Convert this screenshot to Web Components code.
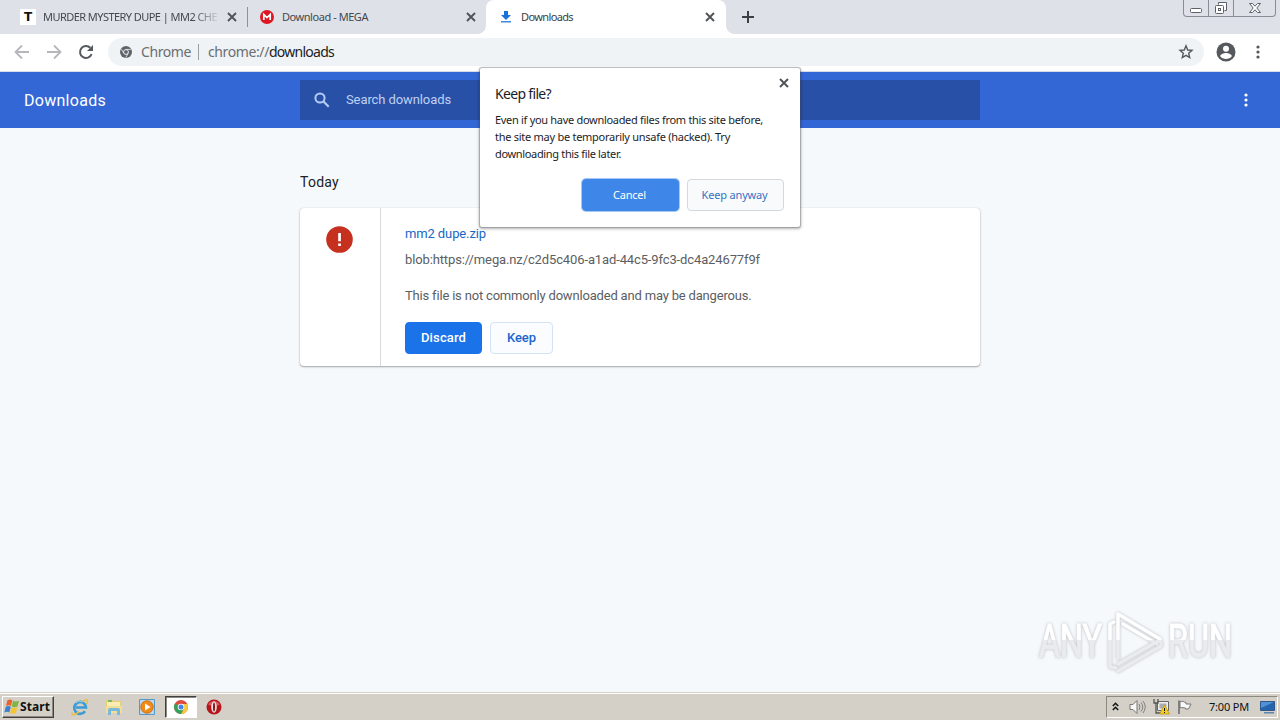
<!DOCTYPE html>
<html lang="en">
<head>
<meta charset="utf-8">
<title>Downloads</title>
<style>
    html, body { margin: 0; width: 1280px; height: 720px; overflow: hidden; }
    body { font-family: "Noto Sans", "Liberation Sans", sans-serif; font-size: 11px; }
</style>
</head>
<body>
<desktop-screen></desktop-screen>
<script>
// Icon data
const icons = {
    back: [16, 16, `<path d="M15 8H2M8 1.5 1.5 8 8 14.5" fill="none" stroke="#b5b7ba" stroke-width="1.8"/>`],
    forward: [16, 16, `<path d="M1 8h13M8 1.5 14.5 8 8 14.5" fill="none" stroke="#b5b7ba" stroke-width="1.8"/>`],
    reload: [16, 16, `<path d="M13.6 10.2A6 6 0 1 1 12.3 3.8" fill="none" stroke="#55585c" stroke-width="2"/><path d="M15 1v6H9z" fill="#55585c"/>`],
    close: [10, 10, `<path d="M1 1l8 8M9 1 1 9" stroke="#505357" stroke-width="1.9"/>`],
    plus: [12, 12, `<path d="M6 0v12M0 6h12" stroke="#3c4043" stroke-width="2"/>`],
    letterT: [16, 16, `<path d="M0 0h16v16H0z" fill="#fff"/><text x="8" y="12.4" text-anchor="middle" font-family="DejaVu Sans" font-weight="bold" font-size="12" fill="#111">T</text>`],
    mega: [14, 14, `<circle cx="7" cy="7" r="7" fill="#dd1822"/><path d="M3.8 10V4.5L7 7.6l3.2-3.1V10" fill="none" stroke="#fff" stroke-width="1.7"/>`],
    download: [10, 12, `<path d="M3 0h4v4h3L5 9 0 4h3z" fill="#1a73d8"/><path d="M0 10h10v1.5H0z" fill="#3b8be0"/>`],
    chromeGrey: [12, 12, `<circle cx="6" cy="6" r="6" fill="#5f6368"/><circle cx="6" cy="6" r="2.4" fill="#5f6368" stroke="#eceef1" stroke-width="1"/><path d="M6 3.4h5M3.8 7.3 1.4 3.1M8.2 7.3 5.8 11.5" stroke="#eceef1" stroke-width=".8"/>`],
    star: [16, 16, `<path d="m8 1.8 1.7 4.2 4.3.4-3.3 2.9 1 4.3L8 11.3l-3.7 2.3 1-4.3L2 6.4l4.300-.4z" fill="none" stroke="#55585c" stroke-width="1.4"/>`],
    account: [20, 20, `<circle cx="10" cy="10" r="9.5" fill="#55585c"/><circle cx="10" cy="6.8" r="3" fill="#fff"/><path d="M4.2 14.2c.3-2.4 3.9-3.2 5.8-3.2s5.5.8 5.8 3.2C14.5 16 12.3 17 10 17s-4.5-1-5.8-2.8z" fill="#fff"/>`],
    dots: [4, 14, `<circle cx="2" cy="2" r="1.6"/><circle cx="2" cy="7" r="1.6"/><circle cx="2" cy="12" r="1.6"/>`],
    search: [16, 16, `<circle cx="6" cy="6" r="4.6" fill="none" stroke="#b4cbf5" stroke-width="2"/><path d="m9.3 9.3 5.4 5.4" stroke="#b4cbf5" stroke-width="2.2"/>`],
    danger: [27, 27, `<circle cx="13.5" cy="13.5" r="13.3" fill="#c5301f"/><path d="M12.2 7h2.7v8.2h-2.7zm0 10.4h2.7V20h-2.7z" fill="#fff"/>`],
    winFlag: [16, 16, `<path d="M3.300 1.400C5 .2 7 .3 8.300 1.300L7 7C5.200 6 3.700 6 2 7z" fill="#e8642c"/><path d="M9 1.800c1.800 1 3.600 1 6 0L13.500 7.500c-1.800 1-4 .9-5.800 0z" fill="#7eb547"/><path d="M1.800 7.800c1.700-1 3.200-1 5 0L5.300 13.500c-1.500-1-3.300-1-5 0z" fill="#3a82cb"/><path d="M7.500 8.300c1.700.9 3.800.9 5.800 0L11.800 14c-2 1-4 .8-5.800-.1z" fill="#f5c52f"/>`],
    ie: [18, 18, `<path d="M14 13.200A5.900 5.900 0 1 1 15 9.500H5" fill="none" stroke="#399bd8" stroke-width="2.700"/><path d="M1.300 14.500C-.5 18 4 17 8 13.800M11.500 3.700C15.800.5 18 1.500 15.600 6" fill="none" stroke="#e8bd45" stroke-width="1.500"/><path d="M5 5.200a5 5 0 0 1 7-.7" fill="none" stroke="#8bd1f5" stroke-width="1"/>`],
    folder: [18, 18, `<path d="M1 2h7l1 1h7v12H1z" fill="#e8cf76"/><path d="M2 4h13v5H2z" fill="#f9edb4"/><path d="M3 2h4v2H3z" fill="#7cb965"/><path d="M1 8h16v7H1z" fill="#f2df95"/><path d="M3 17v-5q0-2 2-2h8q2 0 2 2v5h-3v-4H6v4z" fill="#78b9de"/>`],
    player: [18, 18, `<path d="M1.500 1.500h15v15h-15z" fill="#b9d9f0" stroke="#5598c8"/><circle cx="9" cy="9" r="6.200" fill="#f08a18" stroke="#d36f0c"/><path d="m7 5.500 5.500 3.500L7 12.500z" fill="#fff"/>`],
    chrome: [14, 14, `<circle cx="7" cy="7" r="7" fill="#de4b3d"/><path d="M.9 3.600A7 7 0 0 0 7 14l3-5.300L7 7z" fill="#34a158"/><path d="M13.300 4A7 7 0 0 1 7 14l3-5.200L7 4z" fill="#f7ca3b"/><circle cx="7" cy="7" r="3.300" fill="#fff"/><circle cx="7" cy="7" r="2.500" fill="#4384e6"/>`],
    opera: [16, 16, `<circle cx="8" cy="8" r="7.500" fill="#b5151b"/><path d="M2 5.500a7 7 0 0 1 12 0q-6 3-12 0z" fill="#d9535a"/><ellipse cx="8" cy="8" rx="2.800" ry="5.800" fill="#e8e2dc"/><ellipse cx="8" cy="8" rx="1" ry="4.600" fill="#8d1115"/>`],
    chevrons: [7, 9, `<path d="m.8 4 2.700-2.700L6.200 4M.8 8l2.700-2.700L6.200 8" fill="none" stroke="#111" stroke-width="1.500"/>`],
    speaker: [17, 16, `<path d="M1 5.500h3l4-4v13l-4-4H1z" fill="#f7f7f7" stroke="#777"/><path d="M10 5q2 3 0 6M12 3.500q3.500 4.500 0 9M14 2q4.500 6 0 12" fill="none" stroke="#828282"/>`],
    network: [17, 17, `<path d="M4.500 3.500h11v9h-11z" fill="#eee" stroke="#666"/><path d="M6.500 5.500h7v5h-7z" fill="#a9adb3"/><path d="M1 1v4h4V1M3 5v10h6" fill="none" stroke="#555" stroke-width="1.300"/><path d="m11.500 7 5 9h-10z" fill="#f4cf2c" stroke="#bd9000" stroke-width=".7"/><path d="M11 10h1v3h-1zm0 4h1v1h-1z" fill="#111"/>`],
    flag: [16, 16, `<path d="M2 15V1.500" stroke="#666" stroke-width="1.500"/><path d="M3 2.500c3-1 4 1 6 1v1.500h5l-2.500 5H8.500V9C7 9 5 8 3 9z" fill="#f8f8f8" stroke="#777"/>`],
    monitor: [16, 14, `<path d="M.5 1.500h14v9H.5z" fill="#2463ae" stroke="#31588d"/><path d="M1 2h13L1 8z" fill="#4f93d4"/><path d="M4 12h10v1.500H4z" fill="#5d83b1"/>`],
    min: [14, 16, `<rect x="1.500" y="8.500" width="11" height="4" rx="1" fill="#fff" stroke="#5c6069"/>`],
    restore: [14, 16, `<path d="M4.500 4.500v-2h8v8h-2" fill="#fff" stroke="#5c6069"/><rect x="1.500" y="5.500" width="8" height="8" rx="1" fill="#fff" stroke="#5c6069"/><rect x="4.500" y="8.500" width="2" height="2" fill="none" stroke="#5c6069"/>`],
    winClose: [14, 12, `<path d="M1.500 1.500h3L7 4.200l2.500-2.700h3L8.800 6l3.700 4.500h-3L7 7.800l-2.500 2.700h-3L5.200 6z" fill="#fff" stroke="#5c6069"/>`]
};

class UiIcon extends HTMLElement {
    connectedCallback() {
        const [w, h, body] = icons[this.getAttribute('name')];
        this.attachShadow({ mode: 'open' }).innerHTML = `
            <style>
                :host { display: inline-flex; flex: none; width: ${w}px; height: ${h}px; }
                svg { display: block; fill: currentColor; }
            </style>
            <svg width="${w}" height="${h}" viewBox="0 0 ${w} ${h}">${body}</svg>
        `;
    }
}

// Single line of text, tracked out to a given width
class TextRun extends HTMLElement {
    connectedCallback() {
        this.attachShadow({ mode: 'open' }).innerHTML = `
            <style>
                :host { display: block; flex: none; white-space: nowrap; }
                span { display: inline-block; }
            </style>
            <span><slot></slot></span>
        `;
        requestAnimationFrame(() => this.fit());
        this.fit();
    }

    fit() {
        const width = Number(this.getAttribute('width'));
        const span = this.shadowRoot.querySelector('span');
        span.style.letterSpacing = '0';
        const natural = span.getBoundingClientRect().width;
        if (!width || !natural) return;
        span.style.letterSpacing = (width - natural) / this.textContent.length + 'px';
    }
}

class BrowserTab extends HTMLElement {
    connectedCallback() {
        this.attachShadow({ mode: 'open' }).innerHTML = `
            <style>
                :host {
                    display: flex;
                    align-items: center;
                    box-sizing: border-box;
                    height: 34px;
                    color: #45484d;
                    position: relative;
                }
                .fav { display: flex; width: 16px; justify-content: center; margin-right: 7px; flex: none; }
                .title { flex: 1; overflow: hidden; padding-bottom: 2px; }
                :host([faded]) .title { -webkit-mask-image: linear-gradient(90deg, #000 150px, transparent 178px); }
                :host([active]) { background: #fff; border-radius: 8px 8px 0 0; color: #3c4043; }
                :host([active])::before, :host([active])::after {
                    content: ""; position: absolute; bottom: 0; width: 8px; height: 8px;
                }
                :host([active])::before { left: -8px; background: radial-gradient(circle at 0 0, transparent 7.5px, #fff 8px); }
                :host([active])::after { right: -8px; background: radial-gradient(circle at 100% 0, transparent 7.5px, #fff 8px); }
            </style>
            <div class="fav"><ui-icon name="${this.getAttribute('icon')}"></ui-icon></div>
            <div class="title"><slot></slot></div>
            <ui-icon name="close"></ui-icon>
        `;
    }
}

class TabStrip extends HTMLElement {
    connectedCallback() {
        this.attachShadow({ mode: 'open' }).innerHTML = `
            <style>
                :host { display: flex; height: 34px; background: #dee1e7; align-items: center; }
                .one { width: 247px; padding: 0 10px 0 20px; }
                .sep { width: 1px; height: 20px; background: #8f9298; }
                .two { width: 238px; padding: 0 10px 0 11px; }
                .three { width: 240px; padding: 0 11px 0 12px; }
                .new { margin-left: 16px; }
                .controls {
                    display: flex; margin-left: auto; margin-right: 4px; align-self: flex-start;
                    height: 16px; border: 1px solid #888c95; border-top: 0; border-radius: 0 0 4px 4px;
                }
                .controls div { display: flex; align-items: center; justify-content: center; width: 24px; }
                .controls div + div { border-left: 1px solid #888c95; }
                .controls .x { width: 41px; }
            </style>
            <browser-tab class="one" icon="letterT" faded><text-run width="174">MURDER MYSTERY DUPE | MM2 CHE</text-run></browser-tab>
            <div class="sep"></div>
            <browser-tab class="two" icon="mega"><text-run width="86">Download - MEGA</text-run></browser-tab>
            <browser-tab class="three" icon="download" active><text-run width="52">Downloads</text-run></browser-tab>
            <ui-icon class="new" name="plus"></ui-icon>
            <div class="controls">
                <div><ui-icon name="min"></ui-icon></div>
                <div><ui-icon name="restore"></ui-icon></div>
                <div class="x"><ui-icon name="winClose"></ui-icon></div>
            </div>
        `;
    }
}

class BrowserToolbar extends HTMLElement {
    connectedCallback() {
        this.attachShadow({ mode: 'open' }).innerHTML = `
            <style>
                :host {
                    display: flex; align-items: center; box-sizing: border-box; height: 38px;
                    padding: 0 20px 2px 14px; background: #fff; border-bottom: 1px solid #d6dcea; color: #55585c;
                }
                .nav { display: flex; gap: 16px; }
                .omnibox {
                    display: flex; align-items: center; box-sizing: border-box;
                    width: 1096px; height: 28px; margin-left: 14px; padding: 0 10px 0 12px;
                    border-radius: 14px; background: #f0f3f5; font-size: 14px; color: #6a6d71;
                }
                .omnibox ui-icon:first-child { margin-right: 9px; }
                .bar { width: 1px; height: 16px; margin: 0 9px 0 7px; background: #9b9ea3; }
                .host { color: #202124; }
                .omnibox ui-icon:last-child { margin-left: auto; }
                .account { margin: 0 20px 0 12px; }
            </style>
            <div class="nav">
                <ui-icon name="back"></ui-icon>
                <ui-icon name="forward"></ui-icon>
                <ui-icon name="reload"></ui-icon>
            </div>
            <div class="omnibox">
                <ui-icon name="chromeGrey"></ui-icon>
                <text-run width="50">Chrome</text-run>
                <div class="bar"></div>
                <text-run width="61">chrome://</text-run>
                <text-run class="host" width="65">downloads</text-run>
                <ui-icon name="star"></ui-icon>
            </div>
            <ui-icon class="account" name="account"></ui-icon>
            <ui-icon name="dots"></ui-icon>
        `;
    }
}

class DownloadsHeader extends HTMLElement {
    connectedCallback() {
        this.attachShadow({ mode: 'open' }).innerHTML = `
            <style>
                :host {
                    display: grid; grid-template-columns: 276px 680px 1fr; align-items: center;
                    box-sizing: border-box; height: 56px; padding: 0 32px 0 24px;
                    background: #3367d6; color: #fff; font-family: Roboto, sans-serif;
                }
                .name { font-size: 16px; }
                .search {
                    display: flex; align-items: center; height: 40px; padding-left: 14px; gap: 16px;
                    background: #2850a7; color: #bfd1f3; font-size: 13px;
                }
                .search text-run { padding-bottom: 2px; }
                ui-icon[name=dots] { justify-self: end; }
            </style>
            <text-run class="name" width="82">Downloads</text-run>
            <div class="search"><ui-icon name="search"></ui-icon><text-run width="105">Search downloads</text-run></div>
            <ui-icon name="dots"></ui-icon>
        `;
    }
}

class PushButton extends HTMLElement {
    connectedCallback() {
        this.attachShadow({ mode: 'open' }).innerHTML = `
            <style>
                :host {
                    display: flex; align-items: center; justify-content: center; box-sizing: border-box;
                    height: 32px; border: 1px solid #d5e2f5; border-radius: 4px;
                    background: #fafcff; color: #1a66ce;
                }
                :host([primary]) { background: #1a73e8; border-color: #1a73e8; color: #fff; }
            </style>
            <slot></slot>
        `;
    }
}

class DownloadItem extends HTMLElement {
    connectedCallback() {
        this.attachShadow({ mode: 'open' }).innerHTML = `
            <style>
                :host {
                    display: flex; height: 158px; border-radius: 4px; background: #fff;
                    box-shadow: 0 1px 2px rgba(60,64,67,.45), 0 0 1px rgba(60,64,67,.3);
                    font-size: 13px; line-height: 20px; color: #5b5e62;
                }
                .badge { box-sizing: border-box; width: 81px; padding: 18px 0 0 26px; border-right: 1px solid #d7d9dc; }
                .content { padding: 16px 0 0 24px; }
                .file { color: #1967c5; }
                .url { margin-top: 6px; }
                .warning { margin-top: 16px; }
                .actions { display: flex; gap: 8px; margin-top: 16px; font-weight: 500; }
                .discard { width: 77px; }
                .keep { width: 63px; }
            </style>
            <div class="badge"><ui-icon name="danger"></ui-icon></div>
            <div class="content">
                <text-run class="file" width="81">mm2 dupe.zip</text-run>
                <text-run class="url" width="355">blob:https://mega.nz/c2d5c406-a1ad-44c5-9fc3-dc4a24677f9f</text-run>
                <text-run class="warning" width="346">This file is not commonly downloaded and may be dangerous.</text-run>
                <div class="actions">
                    <push-button class="discard" primary><text-run width="45">Discard</text-run></push-button>
                    <push-button class="keep"><text-run width="29">Keep</text-run></push-button>
                </div>
            </div>
        `;
    }
}

class DownloadsPage extends HTMLElement {
    connectedCallback() {
        this.attachShadow({ mode: 'open' }).innerHTML = `
            <style>
                :host { display: block; flex: 1; background: #f6f9fc; font-family: Roboto, sans-serif; }
                main { width: 680px; margin: 0 auto; padding-top: 44px; }
                .day { font-size: 14px; line-height: 20px; margin-bottom: 16px; color: #202124; }
            </style>
            <main>
                <text-run class="day" width="39">Today</text-run>
                <download-item></download-item>
            </main>
        `;
    }
}

class KeepDialog extends HTMLElement {
    connectedCallback() {
        this.attachShadow({ mode: 'open' }).innerHTML = `
            <style>
                :host {
                    display: block; box-sizing: border-box; width: 320px; height: 159px;
                    padding: 16px 16px 0 15px; background: #fff; border-radius: 2px; color: #1c1d1f;
                    box-shadow: 0 0 0 1px rgba(90,95,105,.3), 0 1px 3px 1px rgba(0,0,0,.3);
                }
                .close { position: absolute; top: 10px; right: 11px; }
                .title { font-size: 14px; line-height: 20px; margin-bottom: 7px; }
                .body { line-height: 17px; }
                .actions { display: flex; justify-content: flex-end; gap: 8px; margin-top: 17px; }
                push-button { width: 97px; background: #f9fafb; border-color: #d5d8dc; color: #3573c4; }
                push-button[primary] { background: #3e87e9; border-color: #3e87e9; color: #fff; box-shadow: 0 0 0 1px #a6c8f5; }
                push-button text-run { padding: 0 2px 2px 0; }
            </style>
            <ui-icon class="close" name="close"></ui-icon>
            <text-run class="title" width="56">Keep file?</text-run>
            <div class="body">
                <text-run width="268">Even if you have downloaded files from this site before,</text-run>
                <text-run width="235">the site may be temporarily unsafe (hacked). Try</text-run>
                <text-run width="126">downloading this file later.</text-run>
            </div>
            <div class="actions">
                <push-button primary><text-run width="33">Cancel</text-run></push-button>
                <push-button><text-run width="66">Keep anyway</text-run></push-button>
            </div>
        `;
    }
}

class AnyRunMark extends HTMLElement {
    connectedCallback() {
        this.attachShadow({ mode: 'open' }).innerHTML = `
            <style>
                :host { display: block; width: 210px; height: 70px; }
                svg { display: block; filter: drop-shadow(0 0 1.500px rgba(90,95,100,.4)); }
                text { font: 400 46px Roboto, sans-serif; stroke: url(#fade); stroke-width: 1.200; }
            </style>
            <svg width="210" height="70" viewBox="0 0 210 70">
                <defs>
                    <linearGradient id="fade" gradientUnits="userSpaceOnUse" x1="0" y1="0" x2="0" y2="70">
                        <stop offset=".5" stop-color="#fff"/><stop offset=".5" stop-color="#e9ebec"/>
                    </linearGradient>
                </defs>
                <text x="5" y="52" textLength="63" lengthAdjust="spacingAndGlyphs" fill="url(#fade)">ANY</text>
                <text x="134" y="52" textLength="64" lengthAdjust="spacingAndGlyphs" fill="url(#fade)">RUN</text>
                <g fill="none" stroke="url(#fade)" stroke-width="3.500" stroke-linejoin="round" stroke-linecap="round">
                    <path d="M84 53V9l42 25"/>
                    <path d="M80 17l-4 2v43l6 1"/>
                    <path d="M84 59l42-24M84 66l43-25v-4M89 19l34 20"/>
                </g>
            </svg>
        `;
    }
}

class TaskBar extends HTMLElement {
    connectedCallback() {
        this.attachShadow({ mode: 'open' }).innerHTML = `
            <style>
                :host {
                    display: flex; align-items: center; box-sizing: border-box; height: 28px;
                    padding: 1px 2px 1px 2px; background: #d4d0c8;
                    border-top: 1px solid #d4d0c8; box-shadow: inset 0 1px #fff; color: #111;
                }
                .start {
                    display: flex; align-items: center; box-sizing: border-box; width: 52px; height: 22px;
                    padding-left: 1px; border: 1px solid; border-color: #fff #404040 #404040 #fff;
                    box-shadow: inset -1px -1px #8d8981; font: bold 12px "Noto Sans", sans-serif;
                }
                .apps { display: flex; align-items: center; margin-left: 17px; }
                .apps > ui-icon:nth-child(-n+3) { margin-right: 15.500px; }
                .running {
                    display: flex; align-items: center; justify-content: center; box-sizing: border-box;
                    width: 32px; height: 22px; margin: 0 9px 0 -7px; background: #fff;
                    border: 1px solid; border-color: #404040 #fff #fff #404040; box-shadow: inset 1px 1px #8d8981;
                }
                .tray {
                    display: flex; align-items: center; box-sizing: border-box; width: 172px; height: 22px;
                    margin-left: auto; padding-left: 5px;
                    border: 1px solid; border-color: #8d8981 #fff #fff #8d8981;
                }
            </style>
            <div class="start"><ui-icon name="winFlag"></ui-icon><text-run width="30">Start</text-run></div>
            <div class="apps">
                <ui-icon name="ie"></ui-icon>
                <ui-icon name="folder"></ui-icon>
                <ui-icon name="player"></ui-icon>
                <div class="running"><ui-icon name="chrome"></ui-icon></div>
                <ui-icon name="opera"></ui-icon>
            </div>
            <div class="tray">
                <ui-icon name="chevrons"></ui-icon>
                <ui-icon name="speaker" style="margin-left: 10px"></ui-icon>
                <ui-icon name="network" style="margin-left: 7px"></ui-icon>
                <ui-icon name="flag" style="margin-left: 7px"></ui-icon>
                <text-run width="40" style="margin: 0 11px 0 16px">7:00 PM</text-run>
                <ui-icon name="monitor"></ui-icon>
            </div>
        `;
    }
}

class DesktopScreen extends HTMLElement {
    connectedCallback() {
        this.attachShadow({ mode: 'open' }).innerHTML = `
            <style>
                :host { display: flex; flex-direction: column; width: 1280px; height: 720px; position: relative; }
                keep-dialog { position: absolute; left: 480px; top: 68px; }
                any-run-mark { position: absolute; left: 1034px; top: 605px; }
            </style>
            <tab-strip></tab-strip>
            <browser-toolbar></browser-toolbar>
            <downloads-header></downloads-header>
            <downloads-page></downloads-page>
            <task-bar></task-bar>
            <keep-dialog></keep-dialog>
            <any-run-mark></any-run-mark>
        `;
    }
}

customElements.define('ui-icon', UiIcon);
customElements.define('text-run', TextRun);
customElements.define('browser-tab', BrowserTab);
customElements.define('tab-strip', TabStrip);
customElements.define('browser-toolbar', BrowserToolbar);
customElements.define('downloads-header', DownloadsHeader);
customElements.define('push-button', PushButton);
customElements.define('download-item', DownloadItem);
customElements.define('downloads-page', DownloadsPage);
customElements.define('keep-dialog', KeepDialog);
customElements.define('any-run-mark', AnyRunMark);
customElements.define('task-bar', TaskBar);
customElements.define('desktop-screen', DesktopScreen);
</script>
</body>
</html>
